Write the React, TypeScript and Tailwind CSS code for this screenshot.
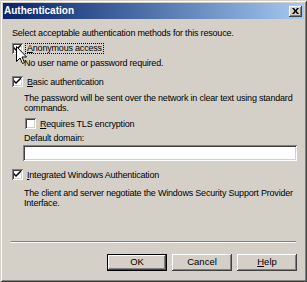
import React from "react";

const font = { fontFamily: '"Liberation Sans", Arial, sans-serif' };

function Check({ checked }: { checked: boolean }) {
  return (
    <div className="w-[11px] h-[11px] bg-white shrink-0 shadow-[inset_1px_1px_0_#808080,inset_-1px_-1px_0_#ffffff,inset_2px_2px_0_#404040,inset_-2px_-2px_0_#d4d0c8] flex items-center justify-center">
      {checked && (
        <svg width="7" height="7" viewBox="0 0 7 7">
          <path d="M0 2 L0 4 L2 6 L7 1 L7 -1 L2 4 Z" fill="#000" />
        </svg>
      )}
    </div>
  );
}

function Btn({ children, def }: { children: React.ReactNode; def?: boolean }) {
  return (
    <div
      className={
        "w-[60px] h-[17px] flex items-center justify-center text-[9.5px] text-black bg-[#d4d0c8] " +
        (def
          ? "shadow-[inset_0_0_0_1px_#000,inset_-2px_-2px_0_#404040,inset_2px_2px_0_#ffffff,inset_-3px_-3px_0_#808080]"
          : "shadow-[inset_-1px_-1px_0_#404040,inset_1px_1px_0_#ffffff,inset_-2px_-2px_0_#808080]")
      }
    >
      {children}
    </div>
  );
}

export default function App() {
  return (
    <div style={font} className="w-[307px] h-[282px] bg-[#d4d0c8] relative overflow-hidden">
      <div className="absolute inset-0 pointer-events-none shadow-[inset_1px_1px_0_#d4d0c8,inset_-1px_-1px_0_#404040,inset_2px_2px_0_#ffffff,inset_-2px_-2px_0_#808080]" />
      <div className="px-[3px] pt-[3px] flex flex-col h-full">
        {/* title bar */}
        <div className="h-[16px] bg-gradient-to-r from-[#0a246a] to-[#a6caf0] flex items-center justify-between pl-[1px] pr-[2px]">
          <span className="text-white font-bold text-[10px] leading-none">Authentication</span>
          <div className="w-[13px] h-[11px] bg-[#d4d0c8] flex items-center justify-center shadow-[inset_-1px_-1px_0_#404040,inset_1px_1px_0_#ffffff,inset_-2px_-2px_0_#808080]">
            <svg width="7" height="6" viewBox="0 0 7 6">
              <path d="M0 0 L2 0 L3.5 2 L5 0 L7 0 L4.5 3 L7 6 L5 6 L3.5 4 L2 6 L0 6 L2.5 3 Z" fill="#000" />
            </svg>
          </div>
        </div>
        {/* body */}
        <div className="flex flex-col pl-[9px] pr-[6px] text-[9px] tracking-[-0.2px] text-black leading-[10px] whitespace-nowrap">
          <div className="mt-[9px]">Select acceptable authentication methods for this resouce.</div>
          <div className="mt-[5px] flex items-center gap-[3px] h-[11px]">
            <Check checked />
            <span className="outline outline-1 outline-dotted outline-black px-[1px] leading-[9px]">
              <u>A</u>nonymous access
            </span>
          </div>
          <div className="mt-[4px] pl-[12px]">No user name or password required.</div>
          <div className="mt-[8px] flex items-center gap-[4px] h-[11px]">
            <Check checked />
            <span>
              <u>B</u>asic authentication
            </span>
          </div>
          <div className="mt-[6px] pl-[12px]">The password will be sent over the network in clear text using standard</div>
          <div className="pl-[12px]">commands.</div>
          <div className="mt-[5px] pl-[13px] flex items-center gap-[4px] h-[11px]">
            <Check checked={false} />
            <span>
              <u>R</u>equires TLS encryption
            </span>
          </div>
          <div className="mt-[4px] pl-[12px]">Default domain:</div>
          <div className="mt-[2px] ml-[11px] w-[274px] h-[16px] bg-white shadow-[inset_1px_1px_0_#808080,inset_-1px_-1px_0_#ffffff,inset_2px_2px_0_#404040,inset_-2px_-2px_0_#d4d0c8]" />
          <div className="mt-[8px] flex items-center gap-[4px] h-[11px]">
            <Check checked />
            <span>
              <u>I</u>ntegrated Windows Authentication
            </span>
          </div>
          <div className="mt-[8px] pl-[12px]">The client and server negotiate the Windows Security Support Provider</div>
          <div className="pl-[12px]">Interface.</div>
        </div>
        <div className="flex-1" />
        <div className="mx-[8px] h-[2px] border-t border-[#808080] border-b border-b-white" />
        <div className="flex justify-end gap-[5px] pr-[7px] mt-[11px] mb-[11px]">
          <Btn def>OK</Btn>
          <Btn>Cancel</Btn>
          <Btn>
            <span>
              <u>H</u>elp
            </span>
          </Btn>
        </div>
      </div>
      {/* mouse cursor */}
      <svg className="absolute left-[16px] top-[46px]" width="12" height="19" viewBox="0 0 12 19">
        <path d="M0.5 0.5 L0.5 15.5 L4 12 L6.5 17.5 L8.5 16.5 L6 11 L10.5 11 Z" fill="#fff" stroke="#000" strokeWidth="1" />
      </svg>
    </div>
  );
}
